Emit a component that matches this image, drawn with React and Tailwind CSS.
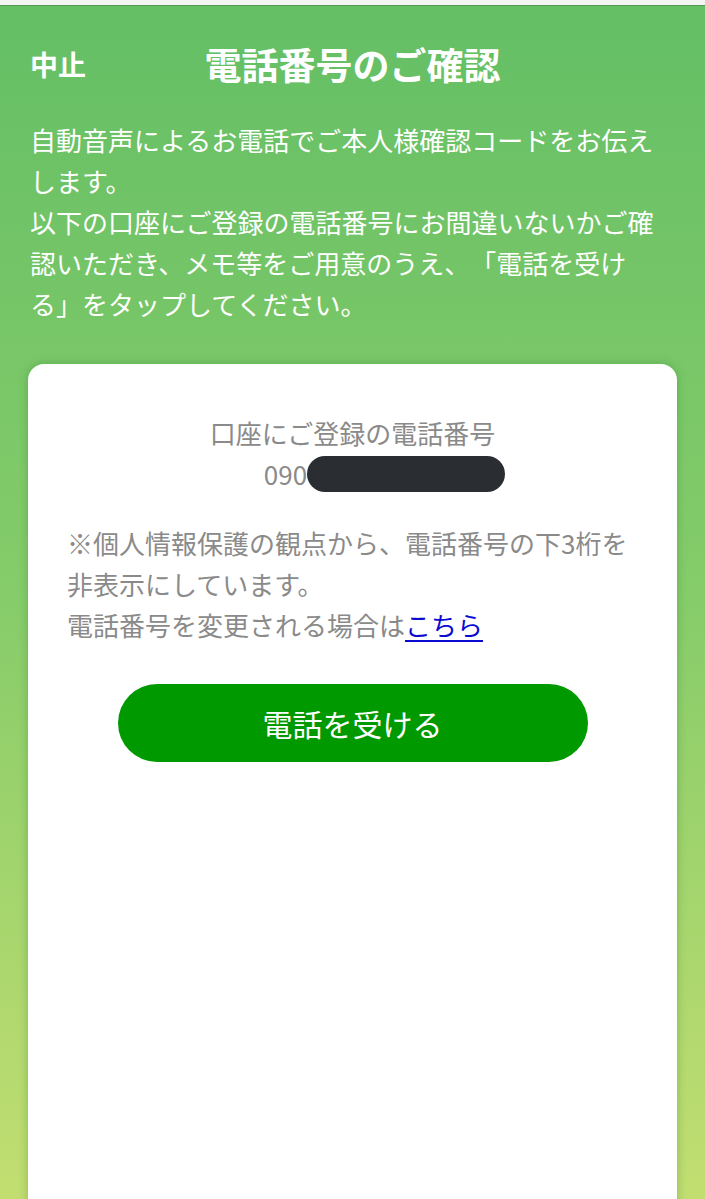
export default function App() {
  return (
    <div
      className="h-[1199px] overflow-hidden bg-[#f4f4f4] [text-spacing-trim:space-all]"
      style={{ fontFamily: '"Noto Sans CJK JP", "Noto Sans", sans-serif' }}
    >
      {/* top status strip */}
      <div className="h-[5px] bg-[#f4f4f4]" />

      <div className="h-[1194px] border-t border-[#4f9a4f] bg-gradient-to-b from-[#64bf65] via-[#86cc6a] to-[#c2de71]">
        {/* Header */}
        <header className="box-content grid h-[58px] grid-cols-[1fr_auto_1fr] items-center px-[30px] pt-[29px] text-white">
          <button className="justify-self-start text-[28px] font-bold leading-none">中止</button>
          <h1 className="text-[37px] font-bold leading-none">電話番号のご確認</h1>
          <div />
        </header>

        {/* Description */}
        <p className="mt-[26px] px-[30px] text-[26px] leading-[41px] text-white">
          自動音声によるお電話でご本人様確認コードをお伝えします。
          <br />
          以下の口座にご登録の電話番号にお間違いないかご確認いただき、メモ等をご用意のうえ、「電話を受ける」をタップしてください。
        </p>

        {/* Card */}
        <div className="mx-[28px] mt-[40px] h-[900px] rounded-t-2xl bg-white px-[39px] pt-[48px] shadow-[0_0_10px_rgba(40,120,40,0.35)]">
          <div className="text-center text-[26px] leading-[41px] text-[#8a8a8a]">
            <p>口座にご登録の電話番号</p>
            <div className="flex items-center justify-center pl-[64px]">
              <span>090</span>
              <span className="h-[36px] w-[198px] rounded-full bg-[#2a2e33]" />
            </div>
          </div>

          <p className="mt-[28px] text-[26px] leading-[41px] text-[#8a8a8a]">
            ※個人情報保護の観点から、電話番号の下3桁を非表示にしています。
            <br />
            電話番号を変更される場合は
            <a href="#" className="text-[#0a0ad0] underline underline-offset-4">
              こちら
            </a>
          </p>

          <div className="mt-[39px] flex justify-center">
            <button className="h-[78px] w-[470px] rounded-full bg-[#009a00] text-[30px] text-white">
              電話を受ける
            </button>
          </div>
        </div>
      </div>
    </div>
  );
}
